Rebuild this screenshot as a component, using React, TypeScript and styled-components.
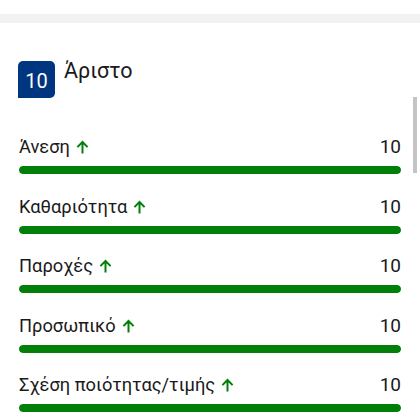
import * as React from 'react';
import styled, { createGlobalStyle } from 'styled-components';

const GlobalStyle = createGlobalStyle`
  html, body {
    margin: 0;
    padding: 0;
    background: #ffffff;
    font-family: Roboto, "Noto Sans", "DejaVu Sans", sans-serif;
    color: #1a1a1a;
  }
`;

const Page = styled.div`
  width: 420px;
  height: 420px;
  overflow: hidden;
  position: relative;
  background: #ffffff;
`;

const Divider = styled.div`
  margin-top: 14px;
  height: 9px;
  background: #f2f2f2;
`;

const Section = styled.section`
  padding: 38px 19px 0 18px;
`;

const Header = styled.div`
  display: flex;
  align-items: flex-start;
  gap: 9px;
`;

const ScoreBadge = styled.div`
  width: 37px;
  height: 37px;
  background: #003580;
  color: #ffffff;
  border-radius: 5px 5px 5px 0;
  display: flex;
  align-items: center;
  justify-content: center;
  font-size: 20px;
  font-weight: 400;
  padding-top: 3px;
  box-sizing: border-box;
`;

const Title = styled.div`
  font-size: 21.5px;
  line-height: 24px;
  margin-top: -2px;
  font-weight: 400;
  color: #1a1a1a;
`;

const List = styled.div`
  margin-top: 38px;
  padding-left: 1px;
`;

const Row = styled.div`
  display: flex;
  flex-direction: column;
  height: 59.5px;
`;

const LabelLine = styled.div`
  display: flex;
  justify-content: space-between;
  align-items: center;
  font-size: 18.3px;
  line-height: 22px;
`;

const Label = styled.span`
  display: inline-flex;
  align-items: center;
  gap: 6px;
`;

const Value = styled.span`
  color: #1a1a1a;
  font-size: 19px;
`;

const Track = styled.div`
  margin-top: 8px;
  height: 8px;
  border-radius: 4px;
  background: #e6e6e6;
  overflow: hidden;
`;

const Fill = styled.div`
  height: 100%;
  border-radius: 4px;
  background: #008009;
`;

const Scrollbar = styled.div`
  position: absolute;
  right: 3px;
  top: 97px;
  width: 4px;
  height: 76px;
  background: #c4c4c4;
`;

const UpArrow = () => (
  <svg width="13" height="14" viewBox="0 0 13 14" fill="none">
    <path d="M6.5 13.5V2M1.4 7.1L6.5 2L11.6 7.1" stroke="#008009" strokeWidth="2" />
  </svg>
);

const scores = [
  { name: 'Άνεση', value: 10 },
  { name: 'Καθαριότητα', value: 10 },
  { name: 'Παροχές', value: 10 },
  { name: 'Προσωπικό', value: 10 },
  { name: 'Σχέση ποιότητας/τιμής', value: 10 },
];

export default function App() {
  return (
    <Page>
      <GlobalStyle />
      <Divider />
      <Section>
        <Header>
          <ScoreBadge>10</ScoreBadge>
          <Title>Άριστο</Title>
        </Header>
        <List>
          {scores.map((s) => (
            <Row key={s.name}>
              <LabelLine>
                <Label>
                  {s.name}
                  <UpArrow />
                </Label>
                <Value>{s.value}</Value>
              </LabelLine>
              <Track>
                <Fill style={{ width: `${s.value * 10}%` }} />
              </Track>
            </Row>
          ))}
        </List>
      </Section>
      <Scrollbar />
    </Page>
  );
}
